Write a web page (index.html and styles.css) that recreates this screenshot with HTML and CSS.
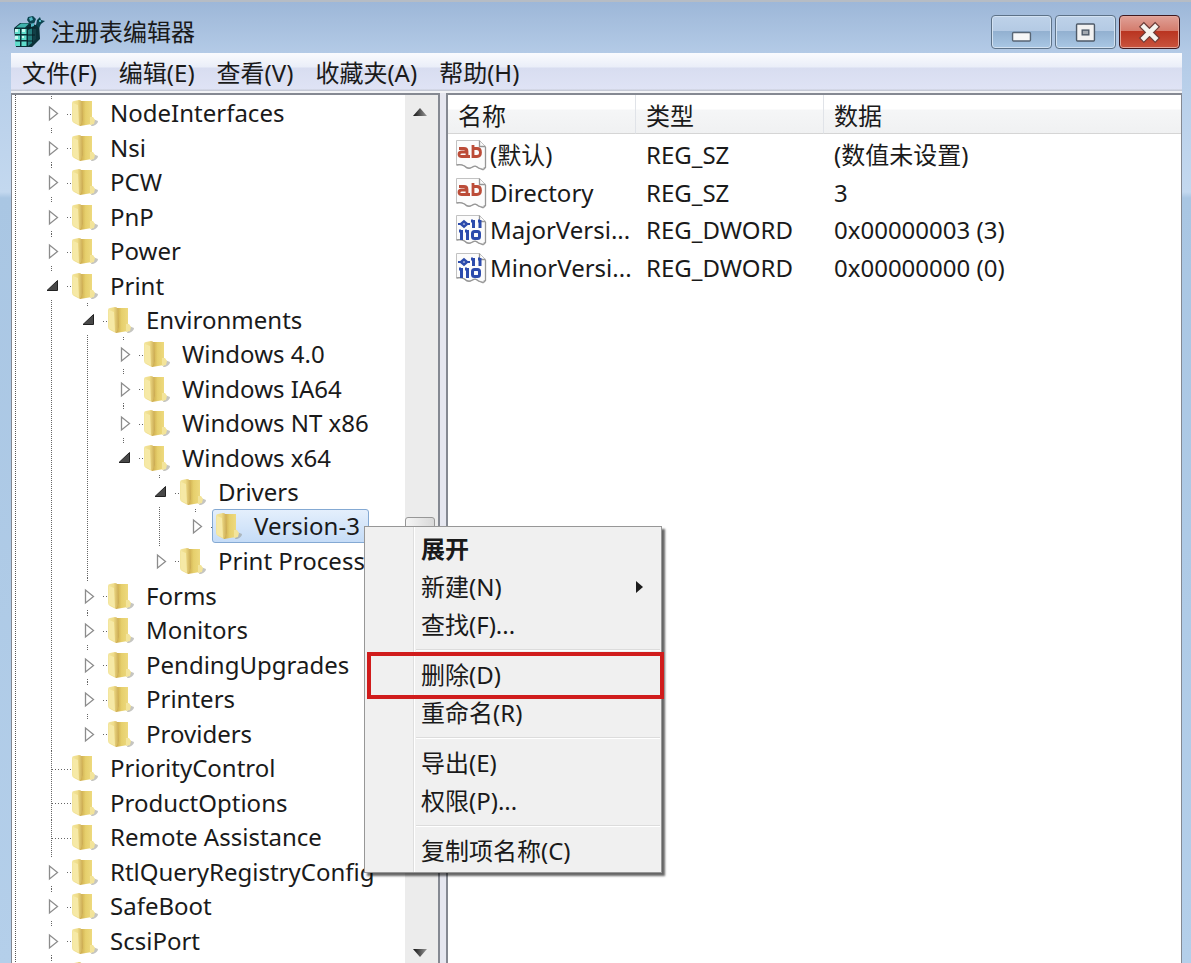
FILE: index.html
```html
<!DOCTYPE html>
<html lang="zh-CN">
<head>
<meta charset="utf-8">
<title>注册表编辑器</title>
<link rel="stylesheet" href="styles.css">
</head>
<body>
<svg class="defs" width="0" height="0" aria-hidden="true">
  <defs>
    <linearGradient id="gBack" x1="0" x2="1" y1="0" y2="0"><stop offset="0" stop-color="#f3e6a0"/><stop offset=".5" stop-color="#efdc88"/><stop offset="1" stop-color="#c9a850"/></linearGradient>
    <linearGradient id="gFront" x1="0" x2="1" y1="0" y2="0"><stop offset="0" stop-color="#c9a548"/><stop offset=".4" stop-color="#e6cf6c"/><stop offset="1" stop-color="#f0dd84"/></linearGradient>
    <linearGradient id="gArrow" x1="0" x2="1" y1="0" y2="0"><stop offset="0" stop-color="#111"/><stop offset="1" stop-color="#999"/></linearGradient>
    <symbol id="folder" viewBox="0 0 26 30">
      <path d="M19 28l2-7 5 2q0 3-5 5z" fill="#8c8c84" opacity=".5"/>
      <path d="M8 3h12v16l2 3-2 4-12 2z" fill="url(#gFront)"/>
      <path d="M18 19h3l2 3-1 4-4 1z" fill="#f3e49a"/>
      <path d="M0 5q0-2 2-2l5-1q2 0 3 2l1 18-3 6-6-3q-2-1-2-3z" fill="url(#gBack)"/>
      <path d="M1 5l5 2 1 20-5-3q-1 0-1-2z" fill="#f6e9a6"/>
    </symbol>
    <symbol id="closed" viewBox="0 0 14 18"><path d="M3.500 3v13l8-6.500z" fill="#fff" stroke="#8c8c8c" stroke-width="1.300"/></symbol>
    <symbol id="open" viewBox="0 0 14 18"><path d="M11.500 3.500v10H1z" fill="#484848" stroke="#222"/></symbol>
    <symbol id="page" viewBox="0 0 32 32">
      <path d="M1.500 1.500h23l6 6V28q-3 3-7 1-3-3-6-1-4 3-8-1-3-2-8-1z" fill="#fcfcfc" stroke="#c2c2c2"/>
      <path d="M24.500 1.500v6h6M30.500 8v20.500l-2 2M1.500 26q4-1 8 1 4 4 8 1 3-2 6 1l5 2" fill="none" stroke="#969696" stroke-width="1.300"/>
    </symbol>
    <symbol id="string" viewBox="0 0 32 32">
      <use href="#page"/>
      <path d="M4 9.500h5q3 0 3 3V18M11 13H7q-3 0-3 2.300T7 17.500h8M18 6v11.500h4q3.500 0 3.500-4T22 9.500h-4" fill="none" stroke="#bc4c38" stroke-width="2.800"/>
    </symbol>
    <symbol id="binary" viewBox="0 0 32 32">
      <use href="#page"/>
      <path d="M18.500 6v8M25 6v8M6.500 16v10M12.500 16v10M4 17h2M10 17h2M16 7h2M23 7h2" fill="none" stroke="#2c4bac" stroke-width="3"/>
      <path d="M9 7.500l3 2.500-3 2.500L6 10z" fill="none" stroke="#2c4bac" stroke-width="2.500"/><path d="M3 10h3m6 0h3" stroke="#2c4bac" stroke-width="2"/>
      <rect x="17.500" y="17.500" width="7" height="7" rx="2" fill="none" stroke="#2c4bac" stroke-width="3"/>
    </symbol>
  </defs>
</svg>

<div class="window">
  <header class="titlebar">
    <svg class="app-icon" viewBox="0 0 32 32" aria-hidden="true">
      <path d="M1 12l6-5h9l7 2 3-3 1 17-8 8H3z" fill="#0a3037"/>
      <path d="M8 7.500h8l-4 4H3z" fill="#3fb3ac"/>
      <path d="M2 13h5v5H2zM8.500 13h5v5h-5zM2 19.500h5v4.500H2zM8.500 19.500h5v4.500h-5zM2 25.500h5V30H2zM8.500 25.500h5V30h-5z" fill="#5fdccb"/>
      <path d="M2 13h3v3H2zM9 13h3v3H9zM2 20h3v3H2zM9 20h2v2H9z" fill="#c6faf0"/>
      <path d="M15 14l4-2v15l-4 3z" fill="#237d7d"/><path d="M20 12l3-1v12l-3 3z" fill="#123f46"/>
      <path d="M15 1l5-1 3 3-2 5-5-1-2-3zM24 4l3-3 1 3 4 1-4 3-2 4-3-3z" fill="#0b4550"/>
      <path d="M16 2l3-1 1 3-3 1zM18 8l3-1v3l-3 1zM26 4h2v2h-2z" fill="#54b8c6"/>
      <path d="M14 12h9M14 19h8M14 25h6" stroke="#071e25"/>
    </svg>
    <h1 class="title">注册表编辑器</h1>
    <div class="caption-buttons">
      <button class="caption" type="button" aria-label="最小化"><svg viewBox="0 0 60 34"><rect x="20.500" y="17.500" width="19" height="9" rx="1" fill="#f7f7f7" stroke="#586675" stroke-width="1.500"/></svg></button>
      <button class="caption" type="button" aria-label="最大化"><svg viewBox="0 0 60 34"><rect x="20.500" y="8.500" width="19" height="18" rx="1" fill="#f2f2f2" stroke="#4e5a68" stroke-width="1.500"/><rect x="26.500" y="15" width="7" height="5" fill="#a3a9b0" stroke="#4e5a68" stroke-width="1.500"/></svg></button>
      <button class="caption close" type="button" aria-label="关闭"><svg viewBox="0 0 60 34"><path d="M24 11.500l12 12M36 11.500l-12 12" stroke="#6c3c38" stroke-width="7.500" stroke-linecap="square"/><path d="M24 11.500l12 12M36 11.500l-12 12" stroke="#f6f3ee" stroke-width="5" stroke-linecap="square"/></svg></button>
    </div>
  </header>

  <nav class="menubar">
    <button type="button">文件(F)</button>
    <button type="button">编辑(E)</button>
    <button type="button">查看(V)</button>
    <button type="button">收藏夹(A)</button>
    <button type="button">帮助(H)</button>
  </nav>

  <main class="panes">
    <section class="tree-pane">
      <ul class="tree" id="tree"></ul>
      <div class="scrollbar">
        <button class="scroll-up" type="button" aria-label="向上滚动"><svg viewBox="0 0 14 8"><path d="M0 8l7-8 7 8z" fill="url(#gArrow)"/></svg></button>
        <div class="track"><div class="thumb"></div></div>
        <button class="scroll-down" type="button" aria-label="向下滚动"><svg viewBox="0 0 14 8"><path d="M0 0h14L7 8z" fill="url(#gArrow)"/></svg></button>
      </div>
    </section>

    <section class="list-pane">
      <table class="values">
        <colgroup><col class="col-name"><col class="col-type"><col></colgroup>
        <thead><tr><th>名称</th><th>类型</th><th>数据</th></tr></thead>
        <tbody>
          <tr><td><div class="value"><svg><use href="#string"/></svg><span>(默认)</span></div></td><td>REG_SZ</td><td>(数值未设置)</td></tr>
          <tr><td><div class="value"><svg><use href="#string"/></svg><span>Directory</span></div></td><td>REG_SZ</td><td>3</td></tr>
          <tr><td><div class="value"><svg><use href="#binary"/></svg><span>MajorVersi...</span></div></td><td>REG_DWORD</td><td>0x00000003 (3)</td></tr>
          <tr><td><div class="value"><svg><use href="#binary"/></svg><span>MinorVersi...</span></div></td><td>REG_DWORD</td><td>0x00000000 (0)</td></tr>
        </tbody>
      </table>
    </section>
  </main>

  <div class="context-menu" role="menu">
    <button class="default" type="button" role="menuitem">展开</button>
    <button type="button" role="menuitem">新建(N)<svg viewBox="0 0 7 12"><path d="M0 0l7 6-7 6z" fill="#1c1c1c"/></svg></button>
    <button type="button" role="menuitem">查找(F)...</button>
    <hr>
    <button class="marked" type="button" role="menuitem">删除(D)</button>
    <button type="button" role="menuitem">重命名(R)</button>
    <hr>
    <button type="button" role="menuitem">导出(E)</button>
    <button type="button" role="menuitem">权限(P)...</button>
    <hr>
    <button type="button" role="menuitem">复制项名称(C)</button>
  </div>
</div>
<script src="tree.js"></script>
</body>
</html>
```
FILE: tree.js
```js
// [label, state, children]; state: "closed", "open" or "leaf"
const keys = [
  ["NodeInterfaces", "closed"], ["Nsi", "closed"], ["PCW", "closed"],
  ["PnP", "closed"], ["Power", "closed"],
  ["Print", "open", [
    ["Environments", "open", [
      ["Windows 4.0", "closed"], ["Windows IA64", "closed"], ["Windows NT x86", "closed"],
      ["Windows x64", "open", [
        ["Drivers", "open", [["Version-3", "closed"]]],
        ["Print Processors", "closed"]
      ]]
    ]],
    ["Forms", "closed"], ["Monitors", "closed"], ["PendingUpgrades", "closed"],
    ["Printers", "closed"], ["Providers", "closed"]
  ]],
  ["PriorityControl", "leaf"], ["ProductOptions", "leaf"], ["Remote Assistance", "leaf"],
  ["RtlQueryRegistryConfig", "closed"], ["SafeBoot", "closed"], ["ScsiPort", "closed"],
  ["SecurePipeServers", "closed"]
];
const selected = "Version-3";

function render(items) {
  return items.map(([label, state, children]) => `
    <li>
      <div class="row">
        ${state === "leaf" ? '<span class="stub"></span>'
          : `<button class="toggle" type="button" aria-label="${label}"><svg><use href="#${state}"/></svg></button>`}
        <button class="node${label === selected ? " selected" : ""}" type="button"><svg><use href="#folder"/></svg><span>${label}</span></button>
      </div>
      ${children ? `<ul>${render(children)}</ul>` : ""}
    </li>`).join("");
}
document.getElementById("tree").innerHTML = render(keys);
```
FILE: styles.css
```css
* { box-sizing: border-box; }
html, body { height: 100%; margin: 0; overflow: hidden; }
body, button {
  font-family: "Noto Sans", "Noto Sans CJK SC", sans-serif;
  font-size: 24px;
  line-height: 34px;
  color: #1a1a1a;
}
button { padding: 0; border: 0; background: none; text-align: left; white-space: nowrap; }
svg { display: block; flex: none; }
.defs { position: absolute; }

.window {
  position: relative;
  display: flex;
  flex-direction: column;
  height: 100vh;
  padding: 0 9px 0 11px;
  border-top: 2px solid #b6bcc4;
  background: linear-gradient(#9db7d8 0, #b3cae6 50px, #b9d0ea 90px, #c3d8ef 190px, #a9c6e3 196px, #b4cfea 100%);
}

/* Title bar */
.titlebar { display: flex; align-items: center; height: 51px; flex: none; padding: 0 2px; }
.app-icon { width: 32px; height: 32px; margin-top: 8px; }
.title { margin: 8px 0 0 6px; font-size: 24px; font-weight: 400; line-height: 34px; }
.caption-buttons { display: flex; gap: 3px; margin: 8px 0 0 auto; }
.caption {
  width: 61px;
  height: 34px;
  border: 1px solid #5d7288;
  border-radius: 4px;
  background: linear-gradient(#bed2e9 0, #b4cae4 46%, #92b0d0 47%, #a9c7e4 100%);
  box-shadow: inset 0 0 0 1px #d3e2f2;
}
.caption svg { width: 100%; height: 100%; }
.caption.close {
  border-color: #40191f;
  background: linear-gradient(#e0a197 0, #d47c6d 46%, #b93420 47%, #c9543e 100%);
  box-shadow: inset 0 0 0 1px #e3a79c;
}

/* Menu bar */
.menubar {
  display: flex;
  gap: 22px;
  flex: none;
  height: 40px;
  padding: 2px 11px 0;
  border-bottom: 2px solid #f3f4f7;
  background: linear-gradient(#fafbfe 0, #eaeef8 14px, #d8ddf0 15px, #dfe3f5 36px, #c6cad6 37px);
}

/* Panes */
.panes { display: flex; flex: 1; min-height: 0; background: #e6e7f0; gap: 6px; }
.tree-pane, .list-pane { border: 2px solid #858992; border-bottom: 0; background: #fff; overflow: hidden; }
.tree-pane { display: flex; flex: none; width: 429px; border-left-width: 1px; }
.list-pane { flex: 1; min-width: 0; border-right-width: 1px; }

/* Tree */
.tree, .tree ul { margin: 0; padding: 0; list-style: none; }
.tree {
  flex: 1;
  min-width: 0;
  padding: 1px 0 0 34px;
  overflow: hidden;
  background: repeating-linear-gradient(#555 0 1px, transparent 1px 2px) 3px 0 / 1px 100% no-repeat;
}
.tree ul { padding-left: 36px; }
.tree li { background: repeating-linear-gradient(#666 0 1px, transparent 1px 2px) 5px 0 / 1px 100% no-repeat; }
.tree ul > li:last-child { background-size: 1px 18px; }
.row {
  display: flex;
  align-items: center;
  height: 34px;
  background: repeating-linear-gradient(to right, #666 0 1px, transparent 1px 3px) 6px 18px / 20px 1px no-repeat;
}
.tree li:nth-child(even) > .row { height: 35px; }
.stub { flex: none; width: 22px; }
.toggle { flex: none; width: 19px; height: 28px; margin-right: 3px; background: #fff; display: flex; align-items: center; }
.toggle svg { width: 14px; height: 18px; }
.node { display: flex; flex: none; align-items: center; gap: 12px; height: 34px; padding: 0 8px 0 3px; border: 1px solid transparent; border-radius: 3px; line-height: 32px; }
.node svg { width: 26px; height: 30px; }
.node.selected { border-color: #84a9d3; background: linear-gradient(#e4effc, #c5dcf7); }

/* Scroll bar */
.scrollbar { display: flex; flex-direction: column; flex: none; width: 33px; padding-right: 3px; background: #ececec; }
.scroll-up, .scroll-down { display: grid; justify-content: center; align-content: center; flex: none; height: 34px; }
.scroll-down { height: 20px; }
.scrollbar svg { width: 14px; height: 8px; }
.track { display: flex; flex: 1; padding-top: 388px; }
.thumb { flex: 1; height: 300px; border: 1px solid #979797; border-radius: 3px; background: linear-gradient(to right, #f5f5f5, #d8d8d8); }

/* Value list */
.values { width: 100%; table-layout: fixed; border-collapse: separate; border-spacing: 0; }
.col-name, .col-type { width: 188px; }
.values th {
  height: 39px;
  padding: 4px 10px 0;
  border-right: 1px solid #e0e3e8;
  border-bottom: 1px solid #d5d5d5;
  background: linear-gradient(#fff 0, #fff 14px, #f5f6f7 15px, #f0f1f2 100%);
  font-weight: 400;
  line-height: 34px;
  text-align: left;
}
.values th:last-child { border-right: 0; }
.values tbody::before { content: ""; display: block; height: 2px; }
.values td { height: 38px; padding: 0 0 0 10px; white-space: nowrap; }
.values tr:nth-child(even) td { height: 37px; }
.values td:first-child { padding: 0 0 0 7px; }
.value { display: flex; align-items: center; gap: 3px; }
.value svg { width: 32px; height: 32px; }

/* Context menu */
.context-menu {
  position: absolute;
  left: 364px;
  top: 524px;
  width: 298px;
  padding: 3px 1px 2px;
  border: 1px solid #979797;
  background: linear-gradient(to right, transparent 48px, #dedede 48px 49px, #fff 49px 50px, transparent 50px) #f0f0f0;
  box-shadow: 3px 3px 2px 0 rgba(0, 0, 0, .6);
}
.context-menu button { position: relative; display: flex; align-items: center; justify-content: space-between; width: 100%; height: 38px; padding: 0 17px 0 55px; }
.context-menu button svg { width: 7px; height: 12px; }
.context-menu .default { font-weight: 700; }
.context-menu hr { height: 2px; margin: 5px 0 5px 50px; border: 0; border-top: 1px solid #dcdcdc; border-bottom: 1px solid #fff; }
.context-menu .marked::after { content: ""; position: absolute; inset: -4px -4px -5px 1px; border: 4px solid #d01c1c; }
```
